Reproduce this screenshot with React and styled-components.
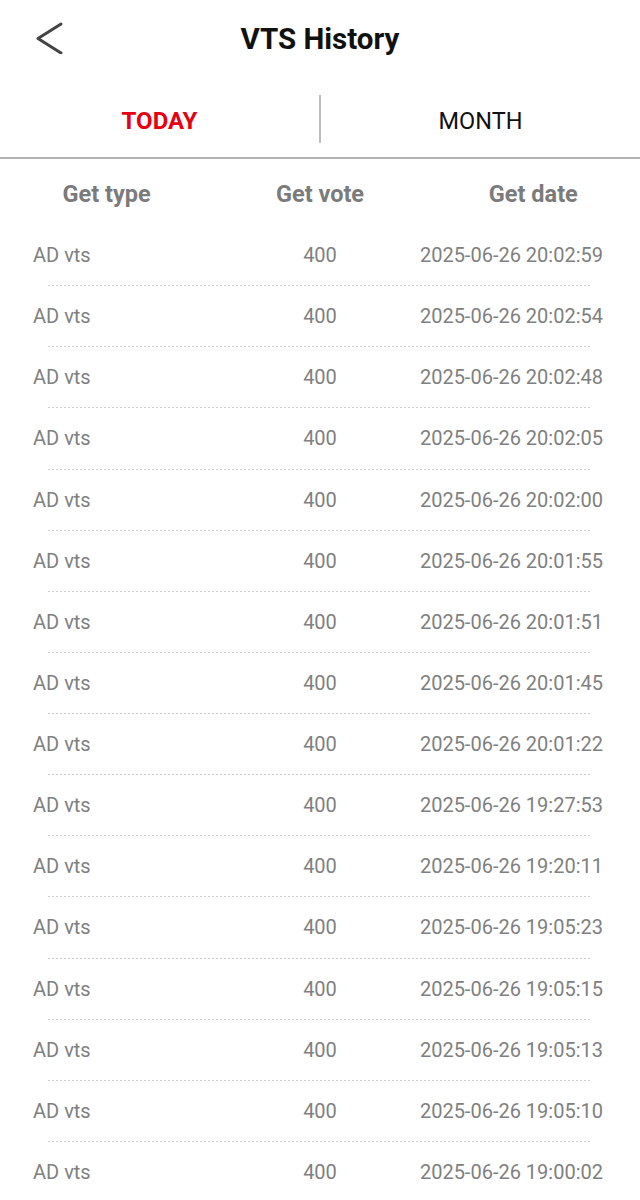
import styled, { createGlobalStyle } from "styled-components";

const GlobalStyle = createGlobalStyle`
  html, body {
    margin: 0;
    padding: 0;
    background: #fff;
  }
  body {
    font-family: Roboto, "Noto Sans", "Liberation Sans", sans-serif;
  }
`;

const Page = styled.div`
  width: 640px;
  min-height: 1200px;
  background: #fff;
`;

/* 상단 바 */
const TopBar = styled.header`
  position: relative;
  height: 80px;
  display: flex;
  align-items: center;
  justify-content: center;
`;

const BackButton = styled.button`
  position: absolute;
  left: 30px;
  top: 18px;
  width: 38px;
  height: 40px;
  padding: 0;
  border: none;
  background: none;
  display: flex;
  align-items: center;
  justify-content: center;
`;

const Title = styled.h1`
  margin: 0 0 2px;
  font-size: 29.5px;
  font-weight: 700;
  color: #111;
`;

/* 탭 */
const Tabs = styled.nav`
  height: 77px;
  display: flex;
  align-items: center;
  border-bottom: 2px solid #b3b3b3;
`;

const Tab = styled.div`
  flex: 1;
  padding-top: 4px;
  text-align: center;
  font-size: ${(p) => (p.$active ? "24px" : "23.5px")};
  font-weight: ${(p) => (p.$active ? 700 : 400)};
  color: ${(p) => (p.$active ? "#e60012" : "#111")};
`;

const TabDivider = styled.div`
  width: 2px;
  height: 48px;
  background: #bdbdbd;
`;

/* 표 머리 */
const HeadRow = styled.div`
  display: grid;
  grid-template-columns: repeat(3, minmax(0, 1fr));
  align-items: center;
  height: 62px;
  padding-top: 4px;
`;

const HeadCell = styled.div`
  text-align: center;
  font-size: 23.5px;
  font-weight: 700;
  color: #7b7b7b;
`;

const Row = styled.div`
  display: grid;
  grid-template-columns: repeat(3, minmax(0, 1fr));
  align-items: center;
  height: 60.13px;
`;

const Cell = styled.div`
  font-size: 20px;
  color: #808080;
  white-space: nowrap;
  text-align: ${(p) => p.$align || "center"};
  padding-left: ${(p) => (p.$align === "left" ? "33px" : "0")};
  padding-right: ${(p) => (p.$align === "right" ? "37px" : "0")};
  direction: ${(p) => (p.$align === "right" ? "rtl" : "ltr")};
`;

const Dots = styled.div`
  height: 1px;
  margin: 0 48px;
  background-image: repeating-linear-gradient(
    to right,
    #cfcfcf 0 2px,
    transparent 2px 4px
  );
`;

const records = [
  "20:02:59",
  "20:02:54",
  "20:02:48",
  "20:02:05",
  "20:02:00",
  "20:01:55",
  "20:01:51",
  "20:01:45",
  "20:01:22",
  "19:27:53",
  "19:20:11",
  "19:05:23",
  "19:05:15",
  "19:05:13",
  "19:05:10",
  "19:00:02",
];

function App() {
  return (
    <Page>
      <GlobalStyle />
      <TopBar>
        <BackButton aria-label="back">
          <svg width="30" height="32" viewBox="0 0 30 32" fill="none">
            <path
              d="M27 2 L4 16.5 L27 31"
              stroke="#444"
              strokeWidth="3"
              strokeLinecap="round"
              strokeLinejoin="round"
            />
          </svg>
        </BackButton>
        <Title>VTS History</Title>
      </TopBar>

      <Tabs>
        <Tab $active>TODAY</Tab>
        <TabDivider />
        <Tab>MONTH</Tab>
      </Tabs>

      <HeadRow>
        <HeadCell>Get type</HeadCell>
        <HeadCell>Get vote</HeadCell>
        <HeadCell>Get date</HeadCell>
      </HeadRow>

      {records.map((time, i) => (
        <div key={i}>
          <Row>
            <Cell $align="left">AD vts</Cell>
            <Cell>400</Cell>
            <Cell $align="right">
              <bdi>2025-06-26 {time}</bdi>
            </Cell>
          </Row>
          {i < records.length - 1 && <Dots />}
        </div>
      ))}
    </Page>
  );
}

export default App;
